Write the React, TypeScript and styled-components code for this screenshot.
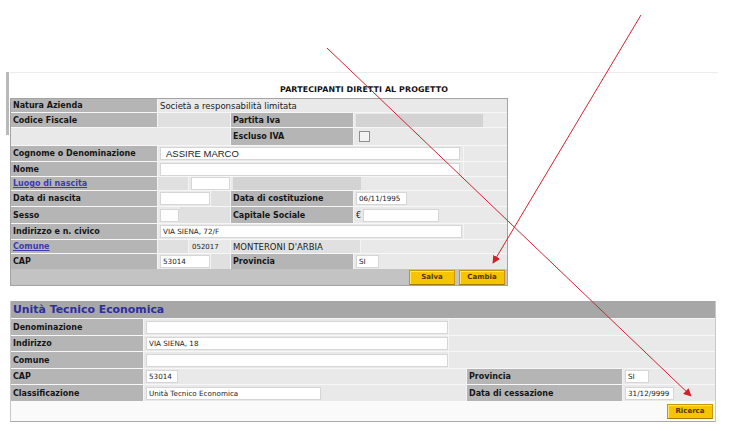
import React from "react";
import styled, { createGlobalStyle } from "styled-components";

const Global = createGlobalStyle`
  html, body { margin: 0; padding: 0; background: #ffffff; }
  body { font-family: "DejaVu Sans", Verdana, sans-serif; }
`;

const Page = styled.div`
  position: relative;
  width: 746px;
  height: 431px;
  overflow: hidden;
  background: #ffffff;
  padding-top: 72px;
  box-sizing: border-box;
`;

const TopArea = styled.div`
  display: flex;
  padding-left: 6px;
`;

const SideMark = styled.div`
  width: 3px;
  height: 63px;
  background: #b9b9b9;
  margin-right: 1px;
  flex: none;
`;

const Panel = styled.div`
  display: flex;
  flex-direction: column;
  width: 708px;
  border-top: 1px solid #ececec;
`;

const Title = styled.div`
  height: 25px;
  display: flex;
  align-items: center;
  justify-content: center;
  padding-top: 7px;
  box-sizing: border-box;
  font-size: 7.9px;
  font-weight: bold;
  color: #111;
  letter-spacing: 0.1px;
`;

const Grid1 = styled.div`
  width: 498px;
  border: 1px solid #a3a3a3;
  background: #eaeaea;
  box-sizing: border-box;
  display: flex;
  flex-direction: column;
`;

const Row = styled.div<{ $h: number; $bg?: string }>`
  display: flex;
  height: ${(p) => p.$h}px;
  border-top: 1px solid #f7f7f7;
  box-sizing: border-box;
  background: ${(p) => p.$bg ?? "transparent"};
  &:first-child { border-top: none; }
`;

type Tone = "label" | "light" | "mid" | "plain";
const toneBg: Record<Tone, string> = {
  label: "#b5b5b5",
  light: "#e9e9e9",
  mid: "#e0e0e0",
  plain: "transparent",
};

const Cell = styled.div<{ $w?: number; $tone?: Tone; $pad?: number }>`
  display: flex;
  align-items: center;
  box-sizing: border-box;
  ${(p) => (p.$w ? `width: ${p.$w}px; flex: none;` : "flex: 1;")}
  background: ${(p) => toneBg[p.$tone ?? "light"]};
  padding: 0 2px 0 ${(p) => p.$pad ?? 2}px;
  gap: 2px;
  border-right: 1px solid #f4f4f4;
  &:last-child { border-right: none; }
`;

const Label = styled.span`
  font-size: 8px;
  font-weight: bold;
  color: #151515;
  white-space: nowrap;
`;

const LinkLabel = styled.a`
  font-size: 8px;
  font-weight: bold;
  color: #3b3bb3;
  text-decoration: underline;
  white-space: nowrap;
`;

const Value = styled.span<{ $size?: number }>`
  font-size: ${(p) => p.$size ?? 8.5}px;
  color: #222;
  white-space: nowrap;
`;

const Field = styled.div<{ $w: number; $tone?: "white" | "gray"; $big?: boolean }>`
  width: ${(p) => p.$w}px;
  height: 13px;
  flex: none;
  box-sizing: border-box;
  display: flex;
  align-items: center;
  padding: 0 ${(p) => (p.$big ? 5 : 2)}px;
  background: ${(p) => (p.$tone === "gray" ? "#d3d3d3" : "#ffffff")};
  border: 1px solid ${(p) => (p.$tone === "gray" ? "#d3d3d3" : "#d6d6d6")};
  font-family: ${(p) => (p.$big ? '"Liberation Sans", Arial, sans-serif' : '"DejaVu Sans", Verdana, sans-serif')};
  font-size: ${(p) => (p.$big ? 9.5 : 7.2)}px;
  color: #222;
  white-space: nowrap;
`;

const Check = styled.div`
  width: 9px;
  height: 9px;
  border: 1px solid #8e8e8e;
  background: #f2f2f2;
  margin-left: 3px;
`;

const ButtonBar = styled.div<{ $h: number; $bg: string }>`
  display: flex;
  justify-content: flex-end;
  align-items: center;
  gap: 4px;
  height: ${(p) => p.$h}px;
  padding-right: 2px;
  background: ${(p) => p.$bg};
  box-sizing: border-box;
`;

const YellowButton = styled.button`
  width: 46px;
  height: 15px;
  padding: 0;
  background: #f6c400;
  border: 1px solid #c99500;
  border-bottom-color: #a87a00;
  box-shadow: inset 1px 1px 0 #ffe36b;
  font-family: "DejaVu Sans", Verdana, sans-serif;
  font-size: 7px;
  font-weight: bold;
  color: #503600;
  cursor: pointer;
`;

const Grid2 = styled.div`
  margin: 15px 0 0 10px;
  width: 706px;
  background: #eaeaea;
  border-left: 1px solid #c8c8c8;
  border-right: 1px solid #c8c8c8;
  border-bottom: 1px solid #a9a9a9;
  box-sizing: border-box;
  display: flex;
  flex-direction: column;
`;

const Header = styled.div`
  height: 17px;
  background: #a7a7a7;
  display: flex;
  align-items: center;
  padding-left: 2px;
  font-size: 10.9px;
  font-weight: bold;
  color: #2e2e9e;
  white-space: nowrap;
`;

const Overlay = styled.svg`
  position: absolute;
  left: 0;
  top: 0;
  pointer-events: none;
`;

function Arrows() {
  return (
    <Overlay width={746} height={431} viewBox="0 0 746 431">
      <defs>
        <marker id="ah" viewBox="0 0 10 10" refX="9" refY="5" markerWidth="8" markerHeight="8" orient="auto" markerUnits="userSpaceOnUse">
          <path d="M0,0 L10,5 L0,10 z" fill="#d21f28" />
        </marker>
      </defs>
      <line x1={327} y1={48} x2={691} y2={396} stroke="#cc2530" strokeWidth={1} markerEnd="url(#ah)" />
      <line x1={641} y1={15} x2={493} y2={263} stroke="#cc2530" strokeWidth={1} markerEnd="url(#ah)" />
    </Overlay>
  );
}

export default function App() {
  return (
    <>
      <Global />
      <Page>
        <TopArea>
          <SideMark />
          <Panel>
            <Title>PARTECIPANTI DIRETTI AL PROGETTO</Title>
            <Grid1>
              <Row $h={13}>
                <Cell $w={147} $tone="label"><Label>Natura Azienda</Label></Cell>
                <Cell $tone="light"><Value>Società a responsabilità limitata</Value></Cell>
              </Row>
              <Row $h={15}>
                <Cell $w={147} $tone="label"><Label>Codice Fiscale</Label></Cell>
                <Cell $w={73} $tone="mid" />
                <Cell $w={123} $tone="label"><Label>Partita Iva</Label></Cell>
                <Cell $tone="light"><Field $w={127} $tone="gray" /></Cell>
              </Row>
              <Row $h={18}>
                <Cell $w={220} $tone="light" />
                <Cell $w={123} $tone="label"><Label>Escluso IVA</Label></Cell>
                <Cell $tone="light"><Check /></Cell>
              </Row>
              <Row $h={16}>
                <Cell $w={147} $tone="label"><Label>Cognome o Denominazione</Label></Cell>
                <Cell $w={306} $tone="light"><Field $w={300} $big>ASSIRE MARCO</Field></Cell>
                <Cell $tone="light" />
              </Row>
              <Row $h={15}>
                <Cell $w={147} $tone="label"><Label>Nome</Label></Cell>
                <Cell $w={306} $tone="light"><Field $w={300} /></Cell>
                <Cell $tone="light" />
              </Row>
              <Row $h={14}>
                <Cell $w={147} $tone="label"><LinkLabel>Luogo di nascita</LinkLabel></Cell>
                <Cell $w={31} $tone="mid" />
                <Cell $w={42} $tone="light"><Field $w={39} /></Cell>
                <Cell $w={130} $tone="light"><Field $w={128} $tone="gray" /></Cell>
                <Cell $tone="light" />
              </Row>
              <Row $h={16}>
                <Cell $w={147} $tone="label"><Label>Data di nascita</Label></Cell>
                <Cell $w={53} $tone="light"><Field $w={50} /></Cell>
                <Cell $w={20} $tone="mid" />
                <Cell $w={123} $tone="label"><Label>Data di costituzione</Label></Cell>
                <Cell $tone="light"><Field $w={51}>06/11/1995</Field></Cell>
              </Row>
              <Row $h={17}>
                <Cell $w={147} $tone="label"><Label>Sesso</Label></Cell>
                <Cell $w={21} $tone="light"><Field $w={19} /></Cell>
                <Cell $w={52} $tone="mid" />
                <Cell $w={123} $tone="label"><Label>Capitale Sociale</Label></Cell>
                <Cell $tone="light"><Value $size={8}>€</Value><Field $w={76} /></Cell>
              </Row>
              <Row $h={16}>
                <Cell $w={147} $tone="label"><Label>Indirizzo e n. civico</Label></Cell>
                <Cell $w={306} $tone="light"><Field $w={302}>VIA SIENA, 72/F</Field></Cell>
                <Cell $tone="light" />
              </Row>
              <Row $h={14}>
                <Cell $w={147} $tone="label"><LinkLabel>Comune</LinkLabel></Cell>
                <Cell $w={31} $tone="mid" />
                <Cell $w={42} $tone="light" $pad={3}><Value $size={7}>052017</Value></Cell>
                <Cell $w={130} $tone="mid"><Value>MONTERONI D'ARBIA</Value></Cell>
                <Cell $tone="light" />
              </Row>
              <Row $h={16}>
                <Cell $w={147} $tone="label"><Label>CAP</Label></Cell>
                <Cell $w={53} $tone="light"><Field $w={50}>53014</Field></Cell>
                <Cell $w={20} $tone="mid" />
                <Cell $w={123} $tone="label"><Label>Provincia</Label></Cell>
                <Cell $tone="light"><Field $w={23}>SI</Field></Cell>
              </Row>
              <ButtonBar $h={16} $bg="#c3c3c3">
                <YellowButton>Salva</YellowButton>
                <YellowButton>Cambia</YellowButton>
              </ButtonBar>
            </Grid1>
          </Panel>
        </TopArea>

        <Grid2>
          <Header>Unità Tecnico Economica</Header>
          <Row $h={17}>
            <Cell $w={133} $tone="label"><Label>Denominazione</Label></Cell>
            <Cell $w={305} $tone="light"><Field $w={302} /></Cell>
            <Cell $tone="light" />
          </Row>
          <Row $h={16}>
            <Cell $w={133} $tone="label"><Label>Indirizzo</Label></Cell>
            <Cell $w={305} $tone="light"><Field $w={302}>VIA SIENA, 18</Field></Cell>
            <Cell $tone="light" />
          </Row>
          <Row $h={17}>
            <Cell $w={133} $tone="label"><Label>Comune</Label></Cell>
            <Cell $w={305} $tone="light"><Field $w={302} /></Cell>
            <Cell $tone="light" />
          </Row>
          <Row $h={16}>
            <Cell $w={133} $tone="label"><Label>CAP</Label></Cell>
            <Cell $w={323} $tone="light"><Field $w={32}>53014</Field></Cell>
            <Cell $w={156} $tone="label"><Label>Provincia</Label></Cell>
            <Cell $tone="light"><Field $w={24}>SI</Field></Cell>
          </Row>
          <Row $h={17}>
            <Cell $w={133} $tone="label"><Label>Classificazione</Label></Cell>
            <Cell $w={323} $tone="light"><Field $w={175}>Unità Tecnico Economica</Field></Cell>
            <Cell $w={156} $tone="label"><Label>Data di cessazione</Label></Cell>
            <Cell $tone="light"><Field $w={49}>31/12/9999</Field></Cell>
          </Row>
          <ButtonBar $h={20} $bg="#fafafa">
            <YellowButton>Ricerca</YellowButton>
          </ButtonBar>
        </Grid2>

        <Arrows />
      </Page>
    </>
  );
}
